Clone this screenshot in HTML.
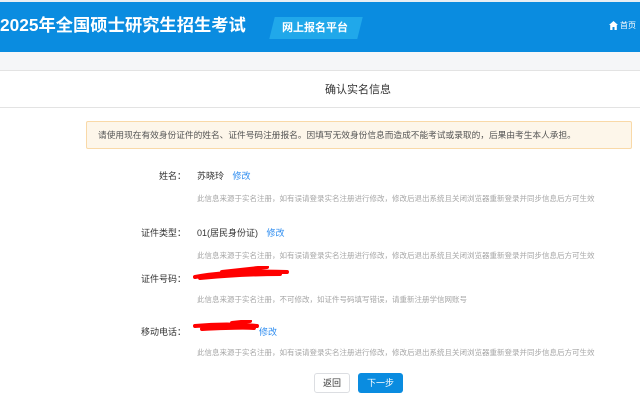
<!DOCTYPE html><html><head><meta charset="utf-8"><style>
*{margin:0;padding:0;box-sizing:border-box}
body{width:640px;height:400px;overflow:hidden;background:#fff;font-family:"Liberation Sans","Noto Sans CJK SC",sans-serif;position:relative;color:#333}
.a{position:absolute;white-space:nowrap}
.hint{font-size:7.5px;color:#a6a6a6;left:197px}
.lab{font-size:9px;color:#333;right:454px}
.val{font-size:9px;color:#333;left:197px}
.lk{color:#2d8cf0;font-size:9px}
</style></head><body>
<div class="a" style="left:0;top:0;width:640px;height:2px;background:#e8eef3"></div>
<div class="a" style="left:0;top:2px;width:640px;height:50px;background:#0a8ce0"></div>
<div class="a" style="left:0;top:14px;font-size:17.3px;font-weight:bold;color:#fff;line-height:22px">2025年全国硕士研究生招生考试</div>
<div class="a" style="left:272px;top:17px;width:88px;height:22px;background:#20a8ea;transform:skewX(-14deg)"></div>
<div class="a" style="left:282px;top:20px;font-size:11px;font-weight:bold;color:#fff;line-height:16px">网上报名平台</div>
<svg class="a" style="left:609px;top:21px" width="9" height="9" viewBox="0 0 9 9"><path d="M4.5 0L0 4h1.2v5h2.3V6h2v3h2.3V4H9z" fill="#fff"/></svg>
<div class="a" style="left:620px;top:20px;font-size:8px;color:#fff;line-height:12px">首页</div>
<div class="a" style="left:0;top:52px;width:640px;height:19px;background:#f5f6f8;border-bottom:1px solid #e3e3e3"></div>
<div class="a" style="left:0;top:107px;width:640px;height:1px;background:#e3e3e3"></div>
<div class="a" style="left:0;top:82px;width:716px;text-align:center;font-size:11px;color:#333;line-height:16px">确认实名信息</div>
<div class="a" style="left:86px;top:121px;width:546px;height:28px;background:#fdf6ea;border:1px solid #f9d9a8;border-radius:2px"></div>
<div class="a" style="left:98px;top:129px;font-size:8.7px;color:#555;line-height:12px">请使用现在有效身份证件的姓名、证件号码注册报名。因填写无效身份信息而造成不能考试或录取的，后果由考生本人承担。</div>
<div class="a lab" style="top:169px">姓名：</div>
<div class="a val" style="top:169px">苏晓玲 <span class="lk" style="margin-left:6px">修改</span></div>
<div class="a hint" style="top:193px">此信息来源于实名注册，如有误请登录实名注册进行修改，修改后退出系统且关闭浏览器重新登录并同步信息后方可生效</div>
<div class="a lab" style="top:226px">证件类型：</div>
<div class="a val" style="top:226px">01(居民身份证) <span class="lk" style="margin-left:6px">修改</span></div>
<div class="a hint" style="top:250px">此信息来源于实名注册，如有误请登录实名注册进行修改，修改后退出系统且关闭浏览器重新登录并同步信息后方可生效</div>
<div class="a lab" style="top:272px">证件号码：</div>
<svg class="a" style="left:192px;top:266px" width="100" height="16"><path d="M3 11C30 6 60 5 95 6M8 12C40 9 70 8 88 8M30 6L75 1" stroke="#f00" stroke-width="4" fill="none" stroke-linecap="round"/></svg>
<div class="a hint" style="top:294px">此信息来源于实名注册，不可修改，如证件号码填写错误，请重新注册学信网账号</div>
<div class="a lab" style="top:325px">移动电话：</div>
<svg class="a" style="left:192px;top:320px" width="70" height="14"><path d="M3 6C25 4 45 4 65 6M10 9C30 8 50 7 62 8M40 3L58 1" stroke="#f00" stroke-width="4" fill="none" stroke-linecap="round"/></svg>
<div class="a lk" style="left:259px;top:325px">修改</div>
<div class="a hint" style="top:347px">此信息来源于实名注册，如有误请登录实名注册进行修改，修改后退出系统且关闭浏览器重新登录并同步信息后方可生效</div>
<div class="a" style="left:314px;top:373px;width:36px;height:20px;border:1px solid #dcdee2;border-radius:3px;font-size:9px;line-height:18px;text-align:center;color:#333">返回</div>
<div class="a" style="left:358px;top:373px;width:45px;height:20px;background:#0a8ce0;border-radius:3px;font-size:9px;line-height:20px;text-align:center;color:#fff">下一步</div>
</body></html>
